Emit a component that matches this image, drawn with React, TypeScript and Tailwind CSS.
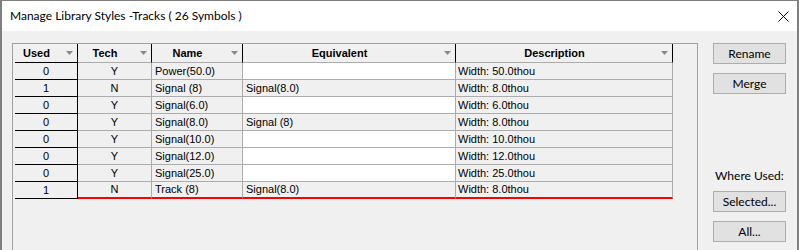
import React from 'react';

const rows = [
  { used: '0', tech: 'Y', name: 'Power(50.0)', eq: '', desc: 'Width: 50.0thou' },
  { used: '1', tech: 'N', name: 'Signal (8)', eq: 'Signal(8.0)', desc: 'Width: 8.0thou' },
  { used: '0', tech: 'Y', name: 'Signal(6.0)', eq: '', desc: 'Width: 6.0thou' },
  { used: '0', tech: 'Y', name: 'Signal(8.0)', eq: 'Signal (8)', desc: 'Width: 8.0thou' },
  { used: '0', tech: 'Y', name: 'Signal(10.0)', eq: '', desc: 'Width: 10.0thou' },
  { used: '0', tech: 'Y', name: 'Signal(12.0)', eq: '', desc: 'Width: 12.0thou' },
  { used: '0', tech: 'Y', name: 'Signal(25.0)', eq: '', desc: 'Width: 25.0thou' },
  { used: '1', tech: 'N', name: 'Track (8)', eq: 'Signal(8.0)', desc: 'Width: 8.0thou' },
];

const cols = [
  { label: 'Used', w: 'w-[63px]' },
  { label: 'Tech', w: 'w-[74px]' },
  { label: 'Name', w: 'w-[91px]' },
  { label: 'Equivalent', w: 'w-[213px]' },
  { label: 'Description', w: 'w-[217px]' },
];

function Arrow() {
  return (
    <svg width="7" height="4" viewBox="0 0 7 4" className="ml-[8px] mr-[4px] shrink-0">
      <path d="M0 0 H7 L3.5 4 Z" fill="#8a8a8a" />
    </svg>
  );
}

function Button({ children }: { children: React.ReactNode }) {
  return (
    <button className="w-[73px] h-[21px] bg-[#e1e1e1] border border-[#adadad] text-[12px] leading-none text-black flex items-center justify-center">
      {children}
    </button>
  );
}

export default function App() {
  return (
    <div className="w-[799px] h-[250px] bg-white overflow-hidden font-['Lato','Noto_Sans',sans-serif]">
      <div className="h-[250px] border-x-2 border-t border-[#7f7f7f] flex flex-col">
        {/* title bar */}
        <div className="h-[30px] bg-white flex items-center justify-between pl-[8px] pr-[8px] shrink-0">
          <span className="text-[12px] text-black">Manage Library Styles -Tracks ( 26 Symbols )</span>
          <svg width="11" height="11" viewBox="0 0 11 11">
            <path d="M0.5 0.5 L10.5 10.5 M10.5 0.5 L0.5 10.5" stroke="#000" strokeWidth="1" />
          </svg>
        </div>

        <div className="flex-1 bg-[#f0f0f0] flex pt-[12px] pl-[10px]">
          {/* list */}
          <div className="w-[686px] h-[230px] border border-[#a0a0a0] pl-[2px] font-['Liberation_Sans',Arial,sans-serif] text-[11px] text-black">
            <div className="flex h-[19px]">
              {cols.map((c, i) => (
                <div
                  key={c.label}
                  className={`${c.w} flex items-center border-r border-r-black border-b ${i === 0 ? 'border-b-black' : 'border-b-[#acacac]'}`}
                >
                  <span className="flex-1 text-center font-bold">{c.label}</span>
                  <Arrow />
                </div>
              ))}
            </div>
            {rows.map((r, ri) => {
              const last = ri === rows.length - 1;
              const other = last ? 'border-b-2 border-b-[#ff0000]' : 'border-b border-b-[#acacac]';
              return (
                <div key={ri} className="flex h-[17px]">
                  <div className="w-[63px] flex items-center justify-center border-r border-b border-black">
                    {r.used}
                  </div>
                  <div className={`w-[74px] flex items-center justify-center border-r border-r-[#acacac] ${other}`}>
                    {r.tech}
                  </div>
                  <div className={`w-[91px] flex items-center pl-[3px] border-r border-r-[#acacac] ${other}`}>
                    {r.name}
                  </div>
                  <div
                    className={`w-[213px] flex items-center pl-[3px] border-r border-r-[#acacac] ${other} ${r.eq ? '' : 'bg-white'}`}
                  >
                    {r.eq}
                  </div>
                  <div className={`w-[217px] flex items-center pl-[2px] border-r border-r-[#acacac] ${other}`}>
                    {r.desc}
                  </div>
                </div>
              );
            })}
          </div>

          {/* side buttons */}
          <div className="ml-[15px] w-[73px] flex flex-col">
            <Button>Rename</Button>
            <div className="mt-[9px]">
              <Button>Merge</Button>
            </div>
            <div className="mt-[74px] h-[16px] pl-[2px] flex items-center whitespace-nowrap text-[12px] text-black">
              Where Used:
            </div>
            <div className="mt-[7px]">
              <Button>Selected...</Button>
            </div>
            <div className="mt-[9px]">
              <Button>All...</Button>
            </div>
          </div>
        </div>
      </div>
    </div>
  );
}
